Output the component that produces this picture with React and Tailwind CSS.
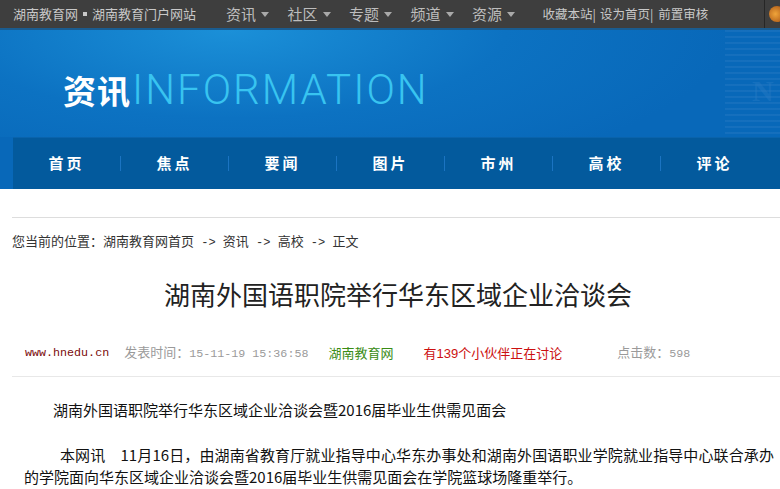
import { useState } from "react";

const topLinks = ["资讯", "社区", "专题", "频道", "资源"];
const navItems = ["首页", "焦点", "要闻", "图片", "市州", "高校", "评论"];

function Caret() {
  return (
    <svg width="8" height="5" viewBox="0 0 8 5" className="ml-[5px]">
      <path d="M0 0 L8 0 L4 5 Z" fill="#a9a9a9" />
    </svg>
  );
}

function Arrow() {
  return <span className="font-['Liberation_Mono',monospace] whitespace-pre text-[12px]"> -&gt; </span>;
}

export default function App() {
  const [active] = useState(5);

  return (
    <div className="w-[780px] h-[489px] overflow-hidden bg-white font-['Noto_Sans_CJK_SC',sans-serif] text-[#222]">
      {/* top bar */}
      <div className="h-[28px] bg-[#3e3e3e] flex items-center pl-[13px] text-[13px] text-[#c8c8c8] whitespace-nowrap relative">
        <span>湖南教育网</span>
        <span className="inline-block w-[4px] h-[4px] bg-[#c8c8c8] mx-[5px]"></span>
        <span>湖南教育门户网站</span>
        <div className="flex ml-[30px]">
          {topLinks.map((t) => (
            <div key={t} className="flex items-center w-[61.5px] text-[15px] text-[#bdbdbd]">
              {t}
              <Caret />
            </div>
          ))}
        </div>
        <div className="flex ml-[9px] text-[12.5px] text-[#c8c8c8]">
          <span>收藏本站|</span>
          <span className="ml-[4px]">设为首页|</span>
          <span className="ml-[5px]">前置审核</span>
        </div>
        <div className="absolute left-[764px] top-0 h-[28px] w-px bg-[#262626]"></div>
        <div className="absolute left-[769px] top-[6px] h-[16px] w-[16px] rounded-full bg-[radial-gradient(circle_at_40%_50%,#f0a43a,#b8661d_70%,#3e3e3e)]"></div>
      </div>
      <div className="h-[2px] bg-[#1a5c90]"></div>

      {/* banner */}
      <div className="h-[107px] relative bg-[radial-gradient(ellipse_500px_160px_at_230px_0px,#1b90d8_0%,#0c72c2_55%,#0868b9_100%)] flex items-center pl-[63px] pt-[13px]">
        <span className="text-[33px] font-bold text-white leading-none tracking-[1px]">资讯</span>
        <span className="text-[42px] font-['Roboto',sans-serif] font-light text-[#38c4f0] leading-none ml-[1px] tracking-[2px]">INFORMATION</span>
        <div className="absolute right-0 top-0 h-full w-[55px] opacity-25 bg-[repeating-linear-gradient(180deg,#3d85c9_0px,#3d85c9_2px,transparent_2px,transparent_6px)]"></div>
        <div className="absolute left-[752px] top-[38px] text-[30px] font-['Liberation_Serif',serif] font-bold text-[#2a7cc6] opacity-40">N</div>
      </div>

      {/* main nav */}
      <div className="flex bg-[#0868b9]">
        <div className="w-[13px]"></div>
        <div className="flex-1 h-[52px] bg-[#035a9d] flex items-center border-t border-[#0a63ab]">
          {navItems.map((n, i) => (
            <div key={n} className="flex items-center">
              {i > 0 && <div className="w-px h-[15px] bg-[#1b74c2]"></div>}
              <div
                className={`w-[107px] text-center text-[15px] font-bold tracking-[3px] text-white ${
                  active === i ? "" : ""
                }`}
              >
                {n}
              </div>
            </div>
          ))}
        </div>
      </div>

      {/* article column */}
      <div className="ml-[12px] w-[772px]">
        <div className="mt-[28px] border-t border-[#dddddd] pt-[13px] text-[13px] text-[#333] whitespace-nowrap">
          您当前的位置：湖南教育网首页<Arrow />资讯<Arrow />高校<Arrow />正文
        </div>

        <h1 className="mt-[26px] text-center text-[26px] font-normal text-[#222] leading-[32px]">
          湖南外国语职院举行华东区域企业洽谈会
        </h1>

        <div className="mt-[34px] flex items-center pl-[13px] pb-[14px] border-b border-[#e8e8e8] whitespace-nowrap text-[11.7px] leading-[16px]">
          <span className="font-['Liberation_Mono',monospace] text-[#7a0a0a]">www.hnedu.cn</span>
          <span className="ml-[15px] text-[#9a9a9a]">
            <span className="text-[13px]">发表时间：</span>
            <span className="font-['Liberation_Mono',monospace]">15-11-19 15:36:58</span>
          </span>
          <span className="ml-[20px] text-[13px] text-[#3a8c16]">湖南教育网</span>
          <span className="ml-[30px] text-[13px] text-[#cc1010]">
            有<span className="font-['Liberation_Sans',sans-serif]">139</span>个小伙伴正在讨论
          </span>
          <span className="ml-[55px] text-[#9a9a9a]">
            <span className="text-[13px]">点击数：</span>
            <span className="font-['Liberation_Mono',monospace]">598</span>
          </span>
        </div>

        <div className="pl-[12px] pr-[10px] text-[15px] leading-[22px] text-[#111]">
          <p className="mt-[22px] pl-[29px]">湖南外国语职院举行华东区域企业洽谈会暨2016届毕业生供需见面会</p>
          <p className="mt-[23px] indent-[36px] text-justify">
            本网讯　11月16日，由湖南省教育厅就业指导中心华东办事处和湖南外国语职业学院就业指导中心联合承办的学院面向华东区域企业洽谈会暨2016届毕业生供需见面会在学院篮球场隆重举行。
          </p>
        </div>
      </div>
    </div>
  );
}
